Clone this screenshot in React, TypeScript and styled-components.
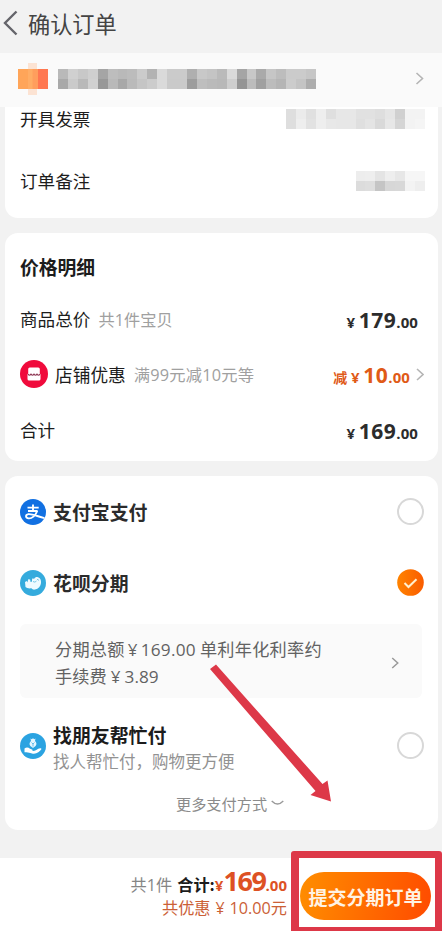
import React from "react";
import styled, { createGlobalStyle } from "styled-components";

const Global = createGlobalStyle`
  * { box-sizing: border-box; }
  body { margin: 0; background: #f2f2f2; }
`;

const Page = styled.div`
  position: relative;
  width: 442px;
  height: 931px;
  overflow: hidden;
  background: #f2f2f2;
  display: flex;
  flex-direction: column;
  font-family: "Noto Sans CJK SC", sans-serif;
  color: #1c1c1c;
  white-space: nowrap;
`;

const Header = styled.header`
  height: 53px;
  flex: none;
  display: flex;
  align-items: center;
  padding: 0 0 8px 3px;
  gap: 10px;
`;

const AddressBar = styled.div`
  height: 54px;
  flex: none;
  display: flex;
  align-items: center;
  padding: 0 18px 3px 17px;
  background: #fafafa;
`;

const Spacer = styled.div`
  flex: 1;
`;

const Card = styled.section<{ $h: number; $top?: boolean }>`
  flex: none;
  height: ${(p) => p.$h}px;
  margin: 0 4px 15px 5px;
  padding: 0 14px 0 15px;
  background: #fff;
  border-radius: ${(p) => (p.$top ? "0 0 13px 13px" : "13px")};
  display: flex;
  flex-direction: column;
`;

const Row = styled.div<{ $h: number; $right?: number }>`
  flex: none;
  height: ${(p) => p.$h}px;
  display: flex;
  align-items: center;
  padding-right: ${(p) => p.$right ?? 0}px;
`;

const Text = styled.span<{ $size: number; $weight?: number; $color?: string; $gap?: number; $track?: number }>`
  font-size: ${(p) => p.$size}px;
  line-height: 26px;
  font-weight: ${(p) => p.$weight ?? 400};
  color: ${(p) => p.$color ?? "inherit"};
  margin-left: ${(p) => p.$gap ?? 0}px;
  letter-spacing: ${(p) => p.$track ?? 0}px;
`;

const Num = styled.span`
  font-family: "Open Sans", sans-serif;
`;

const Price = styled.span<{ $color?: string; $right?: number }>`
  display: flex;
  align-items: baseline;
  font-family: "Open Sans", sans-serif;
  font-weight: 700;
  line-height: 28px;
  padding-top: 3px;
  margin-right: ${(p) => p.$right ?? 0}px;
  color: ${(p) => p.$color ?? "#2c2c2c"};
`;

const Prefix = styled.span`
  font-family: "Noto Sans CJK SC", sans-serif;
  font-size: 14px;
`;

const Yen = styled.span<{ $size: number; $w: number }>`
  font-family: "Open Sans", sans-serif;
  font-size: ${(p) => p.$size}px;
  width: ${(p) => p.$w}px;
  display: inline-block;
  text-align: center;
`;

const Whole = styled.span`
  font-size: 21px;
  letter-spacing: 0.5px;
`;

const Cents = styled.span`
  font-size: 15px;
  letter-spacing: 0.1px;
`;

const Radio = styled.span`
  width: 27px;
  height: 27px;
  border: 2px solid #d8d8d8;
  border-radius: 50%;
`;

const Stack = styled.div<{ $gap: number; $drop: number }>`
  display: flex;
  flex-direction: column;
  padding-top: ${(p) => p.$drop}px;
  margin-left: ${(p) => p.$gap}px;
`;

const Installment = styled.div`
  flex: none;
  height: 74px;
  border-radius: 6px;
  background: #fafafa;
  display: flex;
  align-items: center;
  justify-content: space-between;
  padding: 4px 23px 0 35px;
  margin: 6px 2px 0 0;
`;

const More = styled.div`
  display: flex;
  align-items: center;
  justify-content: center;
  gap: 4px;
  margin-top: -3px;
  padding-left: 16px;
`;

const Footer = styled.footer`
  height: 73px;
  margin-top: 13px;
  flex: none;
  background: #fff;
  display: flex;
  justify-content: flex-end;
  padding-right: 11px;
`;

const Totals = styled.div`
  display: flex;
  flex-direction: column;
  align-items: flex-end;
  padding-top: 9px;
  margin-right: 13px;
`;

const TotalLine = styled.div`
  display: flex;
  align-items: baseline;
  height: 27px;
  line-height: 27px;
`;

const Amount = styled.span<{ $size: number; $track?: number }>`
  font-family: "Open Sans", sans-serif;
  font-size: ${(p) => p.$size}px;
  letter-spacing: ${(p) => p.$track ?? 0}px;
  font-weight: 700;
  color: #dd5124;
`;

const Submit = styled.button`
  width: 131px;
  height: 48px;
  margin-top: 14px;
  padding: 0;
  border: 0;
  border-radius: 24px;
  background: linear-gradient(100deg, #ff8e00, #ff4b00);
  color: #fff3e4;
  font: 700 19px/49px "Noto Sans CJK SC", sans-serif;
  text-align: center;
`;

const Highlight = styled.div`
  position: absolute;
  left: 291px;
  top: 851px;
  width: 151px;
  height: 83px;
  border: 7px solid #dd3848;
  border-left-width: 8px;
  border-radius: 3px 3px 0 0;
`;

const Arrow = styled.svg`
  position: absolute;
  left: 205px;
  top: 660px;
`;

const mosaicAddress = [
  ["#b9b9b9", "#d0d0d0", "#c8c8c8", "#cfcfcf", "#a5a5a5", "#bdbdbd", "#b9b9b9", "#bcbcbc", "#cbcbcb", "#b3b3b3", "#dadada", "#cbcbcb", "#cbcbcb", "#afafaf", "#c8c8c8", "#c4c4c4", "#bababa", "#dadada", "#a5a5a5", "#c8c8c8", "#aaaaaa", "#c6c6c6", "#bdbdbd", "#cbcbcb", "#cbcbcb", "#c6c6c6"],
  ["#a9a9a9", "#cacaca", "#b9b9b9", "#d1d1d1", "#989898", "#b9b9b9", "#a8a8a8", "#bababa", "#c5c5c5", "#cccccc", "#dadada", "#cacaca", "#cacaca", "#9d9d9d", "#bebebe", "#bababa", "#b8b8b8", "#cecece", "#959595", "#bcbcbc", "#a0a0a0", "#bcbcbc", "#b5b5b5", "#cccccc", "#c4c4c4", "#adadad"],
];
const mosaicInvoice = [
  ["#dedede", "#ebebeb", "#e0e0e0", "#eeeeee", "#dfdfdf", "#e7e7e7", "#e7e7e7", "#e1e1e1", "#e1e1e1", "#dedede", "#e5e5e5", "#d0d0d0", "#f3f3f3", "#f3f3f3"],
  ["#dedede", "#eeeeee", "#e2e2e2", "#eeeeee", "#e8e8e8", "#e7e7e7", "#e7e7e7", "#dfdfdf", "#e4e4e4", "#d9d9d9", "#e7e7e7", "#d5d5d5", "#f3f3f3", "#f5f5f5"],
];
const mosaicNote = [
  ["#ededed", "#eeeeee", "#e4e4e4", "#eeeeee", "#e7e7e7", "#f6f6f6", "#f6f6f6"],
  ["#dcdcdc", "#dedede", "#c5c5c5", "#d7d7d7", "#d8d8d8", "#f3f3f3", "#eeeeee"],
];

const MosaicGrid = styled.div<{ $cols: number; $gap?: number }>`
  display: grid;
  grid-template-columns: repeat(${(p) => p.$cols}, 9.93px);
  grid-auto-rows: 10px;
  margin-left: ${(p) => p.$gap ?? 0}px;
  margin-right: -1px;
`;
const Cell = styled.i<{ $c: string }>`
  background: ${(p) => p.$c};
`;

function Mosaic({ rows, gap }: { rows: string[][]; gap?: number }) {
  return (
    <MosaicGrid $cols={rows[0].length} $gap={gap}>
      {rows.flat().map((c, i) => (
        <Cell key={i} $c={c} />
      ))}
    </MosaicGrid>
  );
}

const Chevron = ({ w = 8, h = 13, color = "#b5b5b5" }: { w?: number; h?: number; color?: string }) => (
  <svg width={w} height={h} viewBox="0 0 8 13" fill="none">
    <path d="M1 1l6 5.5L1 12" stroke={color} strokeWidth="1.6" />
  </svg>
);

const StoreIcon = () => (
  <svg width="28" height="28" viewBox="0 0 28 28">
    <circle cx="14" cy="14" r="14" fill="#f00b3c" />
    <path d="M9.8 7.500h8.400q1.600 0 1.600 1.600v4.400l.7.800v4.600q0 1.600-1.600 1.600H9.100q-1.600 0-1.600-1.600v-4.600l.7-.8V9.100q0-1.600 1.600-1.600z" fill="#fff" />
    <path d="M8 14.200q1.500 2 3 0 1.500 2 3 0 1.500 2 3 0 1.500 2 3 0" fill="none" stroke="#8e3854" strokeWidth="1.100" />
  </svg>
);

const AlipayIcon = () => (
  <svg width="26" height="26" viewBox="0 0 26 26">
    <circle cx="13" cy="13" r="13" fill="#1170e2" />
    <g fill="none" stroke="#fff" strokeWidth="1.9">
      <path d="M7.500 8.600h11.200M13 5.500v6.200M8 12h9.600" />
      <path d="M17.200 12C15.500 16.800 11.700 19.700 8.600 19.400 5.300 19 5.100 15.600 8.500 15.100c3.800-.3 9 2.300 16 4" />
    </g>
  </svg>
);

const HuabeiIcon = () => (
  <svg width="26" height="26" viewBox="0 0 26 26">
    <circle cx="13" cy="13" r="13" fill="#35abdd" />
    <path d="M5 12l1.800-1 .6 1.500.8-3.200 1.900.2.500 2.500 1.200-.3.400-3.200 2 .3C15 7.300 16.500 6.800 18 7.300c2.300.8 3.300 2.900 3 5.700-.3 3.400-2.500 5.900-6 6.600-1.600.4-2.700-.3-3.600-1.300-2.400.3-4.900-.1-5.900-1.300z" fill="#eefaff" />
    <path d="M13 11.500q2 1.500 3.500-.5M17 9.200l2 1.200" fill="none" stroke="#79c9e9" strokeWidth="1" />
  </svg>
);

const FriendIcon = () => (
  <svg width="26" height="26" viewBox="0 0 26 26">
    <circle cx="13" cy="13" r="13" fill="#2ba3e1" />
    <path d="M10.500 5.500l1.200.8L13 5.200l1.300 1.100 1.200-.8-.5 2.600c2 1.600 1.900 4.600-.4 5.600L13 15l-1.600-1.300c-2.300-1-2.400-4-.4-5.600z" fill="#e5f6ff" />
    <path d="M11.500 9.500L13 11l1.500-1.500M13 11v2.500" fill="none" stroke="#45aee3" strokeWidth=".8" />
    <path d="M4.500 15.500c2-1.400 4-1 5.500.3l2 .8c1.300.6.700 1.400 0 1.400 2.600.4 4.400-.8 6.300-2.200 1.500-1 3.200-.6 3.200.2-1.500 2.500-4.500 4.600-7.500 4.700-3 0-4-1.500-9.500-1.500z" fill="#fff" />
  </svg>
);

const CheckIcon = () => (
  <svg width="27" height="27" viewBox="0 0 27 27">
    <defs>
      <linearGradient id="check">
        <stop stopColor="#ff8300" />
        <stop offset="1" stopColor="#fa5c00" />
      </linearGradient>
    </defs>
    <circle cx="13.500" cy="13.500" r="13.300" fill="url(#check)" />
    <path d="M7.500 14l4 4 8-7.800" fill="none" stroke="#fff0cf" strokeWidth="2" />
  </svg>
);

export default function App() {
  return (
    <Page>
      <Global />
      <Header>
        <svg width="15" height="26" viewBox="0 0 15 26" fill="none">
          <path d="M13.500 1.500L2 13l11.500 11.500" stroke="#65656b" strokeWidth="2.400" />
        </svg>
        <Text $size={22.2} $color="#444">确认订单</Text>
      </Header>

      <AddressBar>
        <svg width="32" height="36" viewBox="0 0 32 36">
          <path d="M11 2h9v32h-9z" fill="#fce3d3" />
          <path d="M1 8h10v20H1z" fill="#ffa559" />
          <path d="M11 8h10v20H11z" fill="#ffad65" />
          <path d="M15.500 8H21v20h-5.500z" fill="#ff9e5d" />
          <path d="M21 8h10v20H21z" fill="#ff7750" />
        </svg>
        <Mosaic rows={mosaicAddress} gap={9} />
        <Spacer />
        <Chevron w={9} />
      </AddressBar>

      <Card $h={111} $top>
        <Row $h={23}>
          <Text $size={17.6}>开具发票</Text>
          <Spacer />
          <Mosaic rows={mosaicInvoice} />
        </Row>
        <Row $h={101}>
          <Text $size={17.6}>订单备注</Text>
          <Spacer />
          <Mosaic rows={mosaicNote} />
        </Row>
      </Card>

      <Card $h={228}>
        <Row $h={68}>
          <Text $size={18.8} $weight={700}>价格明细</Text>
        </Row>
        <Row $h={36} $right={6}>
          <Text $size={17.6}>商品总价</Text>
          <Text $size={16.2} $color="#a0a0a0" $gap={8} $track={0.1}>共<Num>1</Num>件宝贝</Text>
          <Spacer />
          <Price>
            <Yen $size={15} $w={16}>¥</Yen>
            <Whole>179</Whole>
            <Cents>.00</Cents>
          </Price>
        </Row>
        <Row $h={74}>
          <StoreIcon />
          <Text $size={17.7} $gap={7}>店铺优惠</Text>
          <Text $size={16.3} $color="#a0a0a0" $gap={8} $track={0.2}>满<Num>99</Num>元减<Num>10</Num>元等</Text>
          <Spacer />
          <Price $color="#e05a17" $right={6}>
            <Prefix>减</Prefix>
            <Yen $size={15} $w={16}>¥</Yen>
            <Whole>10</Whole>
            <Cents>.00</Cents>
          </Price>
          <Chevron />
        </Row>
        <Row $h={38} $right={6}>
          <Text $size={17.6}>合计</Text>
          <Spacer />
          <Price>
            <Yen $size={15} $w={16}>¥</Yen>
            <Whole>169</Whole>
            <Cents>.00</Cents>
          </Price>
        </Row>
      </Card>

      <Card $h={354}>
        <Row $h={71}>
          <AlipayIcon />
          <Text $size={18.9} $weight={700} $color="#2b2b2b" $gap={7}>支付宝支付</Text>
          <Spacer />
          <Radio />
        </Row>
        <Row $h={71}>
          <HuabeiIcon />
          <Text $size={18.9} $weight={700} $color="#2b2b2b" $gap={7}>花呗分期</Text>
          <Spacer />
          <CheckIcon />
        </Row>
        <Installment>
          <Stack $gap={0} $drop={0}>
            <Text $size={17.2} $color="#626262" $track={0.24}>分期总额<Yen $size={17} $w={16}>¥</Yen><Num>169.00</Num> 单利年化利率约</Text>
            <Text $size={17.2} $color="#626262">手续费<Yen $size={17} $w={18}>¥</Yen><Num>3.89</Num></Text>
          </Stack>
          <Chevron color="#999" w={8} h={12} />
        </Installment>
        <Row $h={95}>
          <FriendIcon />
          <Stack $gap={7} $drop={4}>
            <Text $size={18.9} $weight={700}>找朋友帮忙付</Text>
            <Text $size={16.5} $color="#929292">找人帮忙付，购物更方便</Text>
          </Stack>
          <Spacer />
          <Radio />
        </Row>
        <More>
          <Text $size={15.2} $color="#8b8b8b">更多支付方式</Text>
          <svg width="13" height="6" viewBox="0 0 13 6" fill="none">
            <path d="M.7 1q5.800 6 11.600 0" stroke="#999" strokeWidth="1.300" />
          </svg>
        </More>
      </Card>

      <Footer>
        <Totals>
          <TotalLine>
            <Text $size={16.2} $color="#858585">共<Num>1</Num>件</Text>
            <Text $size={16.2} $weight={700} $gap={5}>合计:</Text>
            <Amount $size={15}>¥</Amount>
            <Amount $size={27} $track={-1.4}>169</Amount>
            <Amount $size={15}>.00</Amount>
          </TotalLine>
          <Text $size={16.2} $color="#cb6036">共优惠<Yen $size={16} $w={19}>¥</Yen><Num>10.00</Num>元</Text>
        </Totals>
        <Submit>提交分期订单</Submit>
      </Footer>

      <Arrow width="130" height="145" viewBox="205 660 130 145">
        <path d="M210 669L216 664.500 322.500 784 327.500 780.500 331 801.500 310.500 795 315.500 791z" fill="#dd3848" />
      </Arrow>
      <Highlight />
    </Page>
  );
}
